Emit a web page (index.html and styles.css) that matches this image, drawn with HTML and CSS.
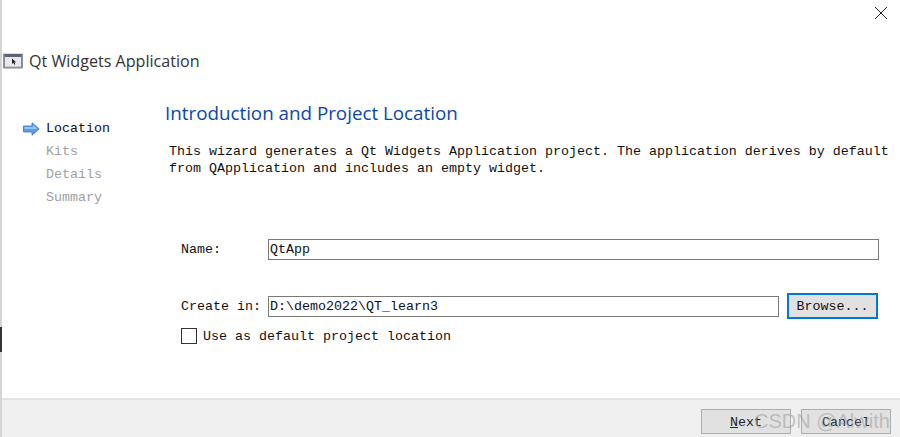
FILE: index.html
```html
<!DOCTYPE html>
<html lang="en">
<head>
<meta charset="utf-8">
<title>Qt Widgets Application</title>
<link rel="stylesheet" href="styles.css">
</head>
<body>
<div class="window">
  <span class="edge-mark"></span>
  <div class="topbar">
    <svg class="close" width="14" height="14" viewBox="0 0 14 14"><path d="M1 1L13 13M13 1L1 13" stroke="#222" stroke-width="1" fill="none"/></svg>
  </div>
  <div class="titlebar">
    <svg class="appicon" width="20" height="16" viewBox="0 0 20 16">
      <rect x="1" y="1.5" width="18" height="13" fill="#e8e8ee" stroke="#5c6470" stroke-width="1.4"/>
      <rect x="2" y="2" width="16" height="2" fill="#5c6470"/>
      <rect x="1" y="14" width="18" height="1.4" fill="#8d949e"/>
      <path d="M9 5.5L9 11L10.4 9.8L11.4 11.8L12.4 11.3L11.4 9.4L13 9.2Z" fill="#222"/>
    </svg>
    <span class="apptitle">Qt Widgets Application</span>
  </div>
  <div class="content">
    <nav class="steps">
      <div class="step current">
        <svg class="arrow" width="17" height="14" viewBox="0 0 17 14">
          <path d="M0.5 4H9V0.8L16.2 7L9 13.2V10H0.5Z" fill="#5b9bea" stroke="#3d74b8" stroke-width="0.8"/>
          <path d="M1.5 5H10V3L14.5 7H1.5Z" fill="#9cc6f5"/>
        </svg>
        <span>Location</span>
      </div>
      <div class="step">Kits</div>
      <div class="step">Details</div>
      <div class="step">Summary</div>
    </nav>
    <main class="page">
      <h1 class="heading">Introduction and Project Location</h1>
      <p class="intro">This wizard generates a Qt Widgets Application project. The application derives by default<br>from QApplication and includes an empty widget.</p>
      <div class="row name-row">
        <label class="label">Name:</label>
        <div class="field grow">QtApp</div>
      </div>
      <div class="row create-row">
        <label class="label">Create in:</label>
        <div class="field path">D:\demo2022\QT_learn3</div>
        <button class="browse" type="button"><span class="btn-text">Browse...</span></button>
      </div>
      <div class="check-row">
        <span class="checkbox"></span>
        <span>Use as default project location</span>
      </div>
    </main>
  </div>
  <footer class="footer">
    <button class="btn" type="button"><span class="btn-text"><u>N</u>ext</span></button>
    <button class="btn" type="button"><span class="btn-text">Cancel</span></button>
  </footer>
  <div class="watermark">CSDN @Alwith</div>
</div>
</body>
</html>
```
FILE: styles.css
```css
* { box-sizing: border-box; }
html, body { margin: 0; padding: 0; }
body { width: 900px; height: 437px; overflow: hidden; background: #fff; }
.window {
  position: relative;
  width: 900px;
  height: 437px;
  display: flex;
  flex-direction: column;
  border-left: 2px solid #d4d4d4;
  font-family: "Liberation Mono", monospace;
  font-size: 13.33px;
  color: #111;
  background: #fff;
}
.edge-mark { position: absolute; left: -2px; top: 327px; width: 2px; height: 25px; background: #333; }
.topbar { height: 48px; display: flex; justify-content: flex-end; padding: 6px 12px 0 0; flex: none; }
.close { display: block; }
.titlebar { height: 26px; display: flex; align-items: center; gap: 6px; flex: none; padding-left: 1px; }
.appicon { display: block; }
.apptitle { font-family: "Open Sans", sans-serif; font-size: 16.1px; color: #333; }
.content { flex: 1; display: flex; min-height: 0; }
.steps { width: 163px; flex: none; padding: 43px 0 0 21px; color: #a0a0a0; }
.step { height: 23px; line-height: 23px; padding-left: 23px; }
.step.current { color: #111; padding-left: 0; display: flex; align-items: center; gap: 6px; }
.arrow { display: block; }
.page { flex: 1; min-width: 0; }
.heading { margin: 0; padding-top: 26px; font-family: "Open Sans", sans-serif; font-size: 18.8px; font-weight: 400; line-height: 26px; color: #0b45b0; }
.intro { margin: 17px 0 0 4px; line-height: 17px; white-space: nowrap; }
.row { display: flex; align-items: center; padding-left: 16px; }
.name-row { margin-top: 62px; padding-right: 21px; }
.create-row { margin-top: 33px; padding-right: 22px; }
.label { width: 87px; flex: none; white-space: nowrap; }
.field { height: 21px; line-height: 19px; border: 1px solid #7a7a7a; padding-left: 1px; background: #fff; }
.grow { flex: 1; }
.path { width: 511px; flex: none; }
.browse {
  width: 91px;
  height: 26px;
  margin-left: 8px;
  border: 2px solid #0078d7;
  background: #e1e1e1;
  font: inherit;
  color: inherit;
  padding: 1px 0 0;
}
.btn-text { display: block; }
.check-row { display: flex; align-items: flex-start; gap: 6px; margin: 10px 0 0 16px; line-height: 16px; }
.checkbox { width: 16px; height: 16px; margin-top: -1px; border: 1px solid #333; background: #fff; }
.footer {
  height: 39px;
  flex: none;
  display: flex;
  justify-content: flex-end;
  align-items: flex-start;
  gap: 10px;
  padding: 9px 9px 0 0;
  background: #f0f0f0;
  border-top: 2px solid #e3e3e3;
}
.btn {
  width: 90px;
  height: 25px;
  border: 1px solid #adadad;
  background: #e1e1e1;
  font: inherit;
  color: #222;
  padding: 1px 0 0;
}
.watermark {
  position: absolute;
  left: 752px;
  top: 408px;
  font-family: "Liberation Sans", sans-serif;
  font-size: 20px;
  line-height: 26px;
  white-space: nowrap;
  color: rgba(150,150,150,0.5);
}
```
